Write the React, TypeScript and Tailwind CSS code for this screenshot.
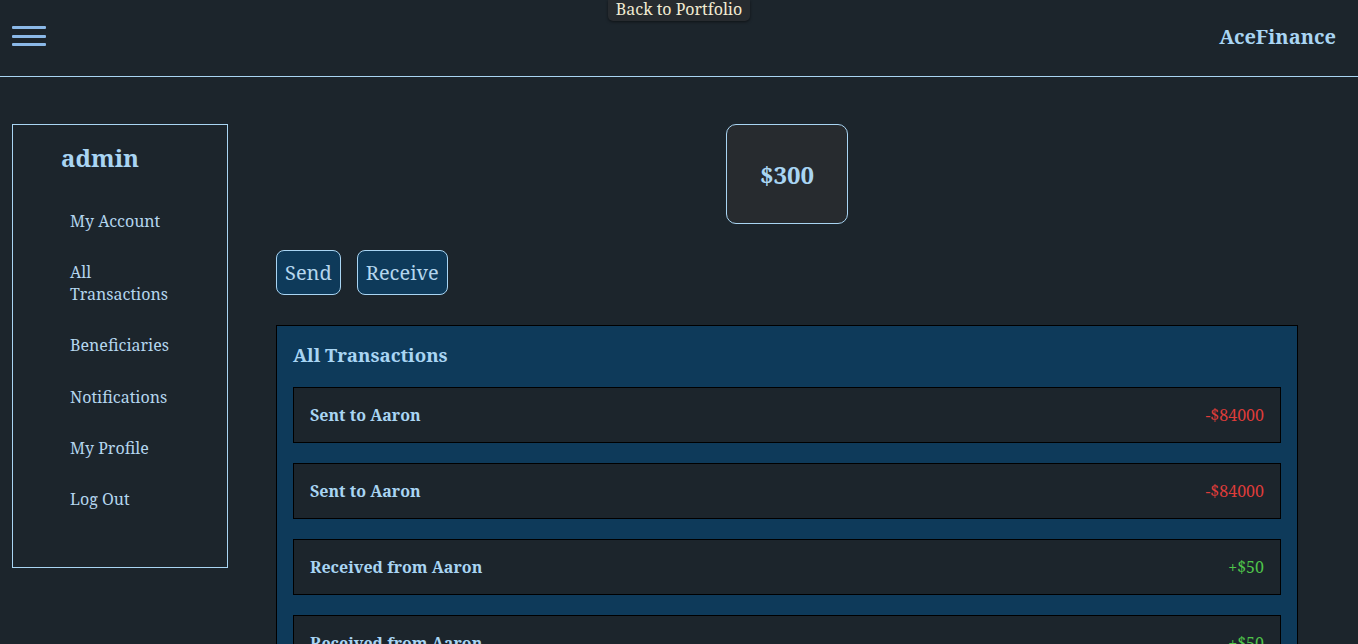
import React from "react";

const font = { fontFamily: '"Noto Serif", "DejaVu Serif", "Liberation Serif", serif' };

const menu = ["My Account", "All Transactions", "Beneficiaries", "Notifications", "My Profile", "Log Out"];

const txs = [
  { label: "Sent to Aaron", amount: "-$84000", neg: true },
  { label: "Sent to Aaron", amount: "-$84000", neg: true },
  { label: "Received from Aaron", amount: "+$50", neg: false },
  { label: "Received from Aaron", amount: "+$50", neg: false },
  { label: "Received from Aaron", amount: "+$50", neg: false },
];

export default function App() {
  return (
    <div className="min-h-screen h-[644px] overflow-hidden bg-[#1c252c] text-[#a9d5f3]" style={font}>
      <header className="relative h-[77px] border-b border-[#a9d5f3] flex items-center justify-between pl-[12px] pr-[23px]">
        <div className="flex flex-col gap-[5.5px] w-[34px] -mt-[4px]">
          <span className="block h-[3px] bg-[#8bb9e8] rounded-[1px]" />
          <span className="block h-[3px] bg-[#8bb9e8] rounded-[1px]" />
          <span className="block h-[3px] bg-[#8bb9e8] rounded-[1px]" />
        </div>
        <div className="absolute left-[608px] top-0 w-[142px] h-[21px] bg-[#272b2f] rounded-b-[5px] text-[#f1ead2] text-[16px] leading-[19px] flex justify-center shadow-[0_1px_3px_rgba(0,0,0,0.5)]">
          Back to Portfolio
        </div>
        <div className="text-[20px] font-bold leading-[28px] -mt-[2px] translate-x-[1px]">AceFinance</div>
      </header>
      <div className="flex pt-[47px]">
        <aside className="ml-[12px] w-[216px] h-[444px] shrink-0 border border-[#a9d5f3] pt-[17px]">
          <div className="pl-[48px] text-[24px] font-bold leading-[32px]">admin</div>
          <ul className="mt-[36px] pl-[57px] flex flex-col gap-[29.2px]">
            {menu.map((m) => (
              <li key={m} className="w-[110px] text-[16px] leading-[22px] text-[#b4d6ee]">
                {m}
              </li>
            ))}
          </ul>
        </aside>
        <main className="ml-[48px] w-[1022px] shrink-0">
          <div className="flex justify-center">
            <div className="w-[122px] h-[100px] pt-[2px] rounded-[10px] border border-[#a9d5f3] bg-[#272b2f] flex items-center justify-center text-[24px] font-bold">
              $300
            </div>
          </div>
          <div className="mt-[26px] flex gap-[16px]">
            <button className="h-[45px] px-[8px] rounded-[8px] border border-[#a9d5f3] bg-[#0e3a5a] text-[20px] text-[#b4d6ee]">
              Send
            </button>
            <button className="h-[45px] px-[8px] rounded-[8px] border border-[#a9d5f3] bg-[#0e3a5a] text-[20px] text-[#b4d6ee]">
              Receive
            </button>
          </div>
          <section className="mt-[30px] bg-[#0e3a5a] border border-black px-[16px] pt-[16px] pb-[20px]">
            <h2 className="text-[18.72px] font-bold leading-[26px]">All Transactions</h2>
            <div className="mt-[19px] flex flex-col gap-[20px]">
              {txs.map((t, i) => (
                <div
                  key={i}
                  className="h-[56px] bg-[#1c252c] border border-black flex items-center justify-between px-[16px]"
                >
                  <span className="text-[16px] font-bold">{t.label}</span>
                  <span className={`text-[16px] ${t.neg ? "text-[#de3c3a]" : "text-[#4fc34a]"}`}>{t.amount}</span>
                </div>
              ))}
            </div>
          </section>
        </main>
      </div>
    </div>
  );
}
